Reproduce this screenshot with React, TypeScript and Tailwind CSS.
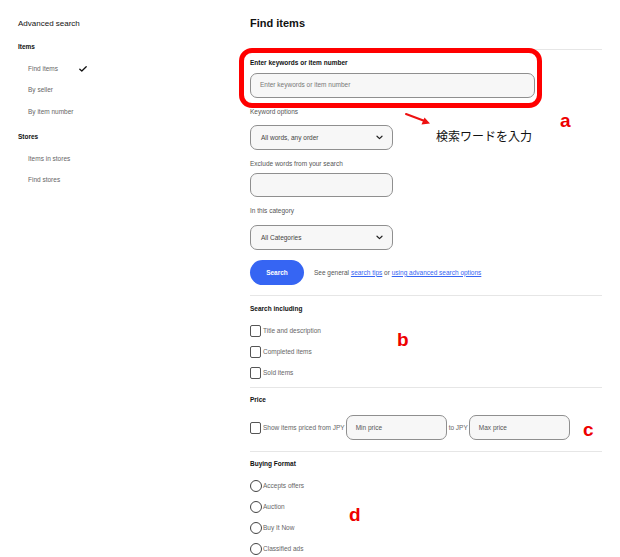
import React from "react";

const Chevron = () => (
  <svg width="7" height="5" viewBox="0 0 7 5" className="shrink-0">
    <path d="M1 1.2 L3.5 3.6 L6 1.2" fill="none" stroke="#222" strokeWidth="1.2" strokeLinecap="round" strokeLinejoin="round" />
  </svg>
);

const Label = ({ children, bold = false }: { children: React.ReactNode; bold?: boolean }) => (
  <div className={`h-[12px] leading-[12px] text-[6.5px] ${bold ? "font-bold text-[#111]" : "text-[#555]"}`}>{children}</div>
);

const Select = ({ text, className = "" }: { text: string; className?: string }) => (
  <div className={`w-[143px] h-[25px] rounded-[7px] border border-[#8f8f8f] bg-[#f7f7f7] flex items-center justify-between pl-[10px] pr-[9px] ${className}`}>
    <span className="text-[6.5px] text-[#444]">{text}</span>
    <Chevron />
  </div>
);

const CheckRow = ({ text }: { text: string }) => (
  <div className="h-[21px] flex items-center gap-[2px]">
    <div className="w-[11px] h-[12px] rounded-[2px] border border-[#555] bg-white" />
    <span className="text-[6.5px] text-[#666]">{text}</span>
  </div>
);

const RadioRow = ({ text }: { text: string }) => (
  <div className="h-[21px] flex items-center gap-[1px]">
    <div className="w-[12px] h-[12px] rounded-full border border-[#444] bg-white" />
    <span className="text-[6.5px] text-[#666]">{text}</span>
  </div>
);

const SideItem = ({ text, check = false }: { text: string; check?: boolean }) => (
  <div className="h-[21.5px] flex items-center pl-[28px] relative">
    <span className="text-[6.5px] text-[#666]">{text}</span>
    {check && (
      <svg width="8" height="6" viewBox="0 0 8 6" className="absolute left-[79px] top-[8px]">
        <path d="M0.8 3.2 L2.8 5 L7.2 0.8" fill="none" stroke="#111" strokeWidth="1.3" strokeLinecap="round" strokeLinejoin="round" />
      </svg>
    )}
  </div>
);

export default function App() {
  return (
    <div
      className="w-[620px] h-[557px] bg-white relative overflow-hidden flex"
      style={{ fontFamily: '"Liberation Sans", Arial, sans-serif' }}
    >
      {/* Sidebar */}
      <div className="w-[250px] shrink-0 pt-[18px]">
        <div className="pl-[18px] h-[12px] leading-[12px] text-[8px] text-[#111]">Advanced search</div>
        <div className="pl-[18px] mt-[11px] h-[12px] leading-[12px] text-[6.5px] font-bold text-[#111]">Items</div>
        <div className="mt-[5px]">
          <SideItem text="Find items" check />
          <SideItem text="By seller" />
          <SideItem text="By item number" />
        </div>
        <div className="pl-[18px] mt-[4px] h-[21.5px] flex items-center text-[6.5px] font-bold text-[#111]">Stores</div>
        <SideItem text="Items in stores" />
        <SideItem text="Find stores" />
      </div>

      {/* Main */}
      <div className="w-[352px] shrink-0">
        <div className="h-[50px] border-b border-[#e6e6e6] pt-[16px]">
          <div className="h-[14px] leading-[14px] text-[11px] font-bold text-[#111]">Find items</div>
        </div>

        <div className="mt-[7px]">
          <Label bold>Enter keywords or item number</Label>
        </div>
        <div className="mt-[4px] w-[285px] h-[25px] rounded-[7px] border border-[#8f8f8f] bg-[#f7f7f7] flex items-center pl-[9px] pb-[1px]">
          <span className="text-[6.5px] text-[#777]">Enter keywords or item number</span>
        </div>

        <div className="mt-[8px]">
          <Label>Keyword options</Label>
        </div>
        <Select text="All words, any order" className="mt-[7px]" />

        <div className="mt-[8px]">
          <Label>Exclude words from your search</Label>
        </div>
        <div className="mt-[3px] w-[143px] h-[24px] rounded-[7px] border border-[#8f8f8f] bg-[#f7f7f7]" />

        <div className="mt-[8px]">
          <Label>In this category</Label>
        </div>
        <Select text="All Categories" className="mt-[8px]" />

        <div className="mt-[10px] h-[25px] flex items-center">
          <div className="w-[54px] h-[25px] rounded-full bg-[#3665f3] flex items-center justify-center">
            <span className="text-[6.5px] font-bold text-white">Search</span>
          </div>
          <span className="ml-[10px] text-[6.5px] text-[#555]">
            See general <span className="text-[#3665f3] underline">search tips</span> or{" "}
            <span className="text-[#3665f3] underline">using advanced search options</span>
          </span>
        </div>

        <div className="mt-[10px] border-t border-[#e6e6e6]" />
        <div className="mt-[7px]">
          <Label bold>Search including</Label>
        </div>
        <div className="mt-[5px]">
          <CheckRow text="Title and description" />
          <CheckRow text="Completed items" />
          <CheckRow text="Sold items" />
        </div>

        <div className="mt-[4px] border-t border-[#e6e6e6]" />
        <div className="mt-[6px]">
          <Label bold>Price</Label>
        </div>
        <div className="mt-[9px] h-[25px] flex items-center">
          <div className="w-[11px] h-[12px] rounded-[2px] border border-[#555] bg-white" />
          <span className="ml-[2px] text-[6.5px] text-[#666]">Show items priced from JPY</span>
          <div className="ml-[1px] w-[101px] h-[25px] rounded-[7px] border border-[#8f8f8f] bg-[#f7f7f7] flex items-center pl-[9px]">
            <span className="text-[6.5px] text-[#555]">Min price</span>
          </div>
          <span className="ml-[2px] text-[6.5px] text-[#666]">to JPY</span>
          <div className="ml-[1px] w-[101px] h-[25px] rounded-[7px] border border-[#8f8f8f] bg-[#f7f7f7] flex items-center pl-[9px]">
            <span className="text-[6.5px] text-[#555]">Max price</span>
          </div>
        </div>

        <div className="mt-[11px] border-t border-[#e6e6e6]" />
        <div className="mt-[6px]">
          <Label bold>Buying Format</Label>
        </div>
        <div className="mt-[5.5px]">
          <RadioRow text="Accepts offers" />
          <RadioRow text="Auction" />
          <RadioRow text="Buy It Now" />
          <RadioRow text="Classified ads" />
        </div>
      </div>

      {/* Annotations */}
      <div className="absolute left-[239px] top-[48px] w-[303px] h-[60px] border-[5px] border-[#ff0000] rounded-[13px]" />
      <svg className="absolute left-[404px] top-[111px]" width="30" height="16" viewBox="0 0 30 16">
        <path d="M2 3 L22 10.5" stroke="#ee1111" strokeWidth="2" strokeLinecap="round" />
        <path d="M26 12.5 L17.5 13.5 L20.5 6.5 Z" fill="#ee1111" />
      </svg>
      <div
        className="absolute left-[436px] top-[128px] text-[12px] leading-[16px] text-[#111]"
        style={{ fontFamily: '"Noto Sans CJK JP", sans-serif' }}
      >
        検索ワードを入力
      </div>
      <div className="absolute left-[560px] top-[110px] text-[19px] leading-[22px] font-bold text-[#ee0000]">a</div>
      <div className="absolute left-[397px] top-[329px] text-[19px] leading-[22px] font-bold text-[#ee0000]">b</div>
      <div className="absolute left-[583px] top-[419px] text-[19px] leading-[22px] font-bold text-[#ee0000]">c</div>
      <div className="absolute left-[349px] top-[504px] text-[19px] leading-[22px] font-bold text-[#ee0000]">d</div>
    </div>
  );
}
